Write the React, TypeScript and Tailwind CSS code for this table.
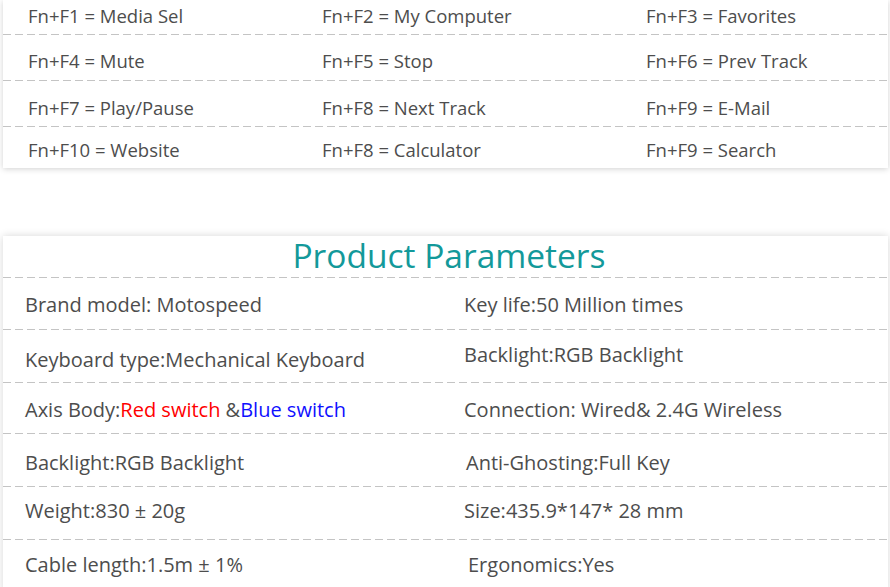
import React from 'react';

const Dash = () => (
  <div className="h-px w-full bg-[linear-gradient(to_right,#c4c4c4_65%,transparent_65%)] bg-[length:12px_1px] bg-repeat-x" />
);

const fnRows: { h: string; items: string[] }[] = [
  { h: 'h-[34px] pb-[3px]', items: ['Fn+F1 = Media Sel', 'Fn+F2 = My Computer', 'Fn+F3 = Favorites'] },
  { h: 'h-[45px] pt-[7px]', items: ['Fn+F4 = Mute', 'Fn+F5 = Stop', 'Fn+F6 = Prev Track'] },
  { h: 'h-[45px] pt-[9px]', items: ['Fn+F7 = Play/Pause', 'Fn+F8 = Next Track', 'Fn+F9 = E-Mail'] },
  { h: 'h-[41px] pt-[5px]', items: ['Fn+F10 = Website', 'Fn+F8 = Calculator', 'Fn+F9 = Search'] },
];

type Param = { text: React.ReactNode; shift?: string };

const paramRows: { h: string; left: Param; right: Param }[] = [
  { h: 'h-[51px] pt-[3px]', left: { text: 'Brand model: Motospeed' }, right: { text: 'Key life:50 Million times' } },
  {
    h: 'h-[52px] pt-[8px]',
    left: { text: 'Keyboard type:Mechanical Keyboard' },
    right: { text: 'Backlight:RGB Backlight', shift: '-translate-y-[5px]' },
  },
  {
    h: 'h-[50px] pt-[4px]',
    left: {
      text: (
        <>
          Axis Body:<span className="font-medium text-[#ff0000]">Red switch</span> &amp;
          <span className="font-medium text-[#1010ff]">Blue switch</span>
        </>
      ),
    },
    right: { text: 'Connection: Wired& 2.4G Wireless' },
  },
  {
    h: 'h-[52px] pt-[6px]',
    left: { text: 'Backlight:RGB Backlight' },
    right: { text: 'Anti-Ghosting:Full Key', shift: 'pl-[2px]' },
  },
  { h: 'h-[52px] pb-[4px]', left: { text: 'Weight:830 ± 20g' }, right: { text: 'Size:435.9*147* 28 mm' } },
  { h: 'h-[52px] pb-[2px]', left: { text: 'Cable length:1.5m ± 1%' }, right: { text: 'Ergonomics:Yes', shift: 'pl-[4px]' } },
];

export default function App() {
  return (
    <div
      className="w-[890px] h-[587px] overflow-hidden bg-white"
      style={{ fontFamily: '"Open Sans", "Noto Sans", sans-serif' }}
    >
      {/* function keys card */}
      <div className="mx-[3px] w-[885px] bg-white shadow-[0_1px_6px_rgba(0,0,0,0.18)]">
        {fnRows.map((row, i) => (
          <div key={i}>
            <div className={`grid grid-cols-[294px_324px_1fr] items-center pl-[25px] text-[18.5px] text-[#4d4d4d] ${row.h}`}>
              {row.items.map((t) => (
                <span key={t}>{t}</span>
              ))}
            </div>
            {i < fnRows.length - 1 && <Dash />}
          </div>
        ))}
      </div>

      {/* product parameters card */}
      <div className="mx-[3px] mt-[68px] w-[885px] bg-white shadow-[0_0_8px_rgba(0,0,0,0.16)]">
        <div className="h-[41px] pb-[2px] pl-[7px] flex items-center justify-center text-[33.5px] text-[#13999a]">
          Product Parameters
        </div>
        <Dash />
        {paramRows.map((row, i) => (
          <div key={i}>
            <div className={`grid grid-cols-[439px_1fr] items-center pl-[22px] text-[20px] text-[#4d4d4d] ${row.h}`}>
              <span>{row.left.text}</span>
              <span className={row.right.shift}>{row.right.text}</span>
            </div>
            {i < paramRows.length - 1 && <Dash />}
          </div>
        ))}
      </div>
    </div>
  );
}
